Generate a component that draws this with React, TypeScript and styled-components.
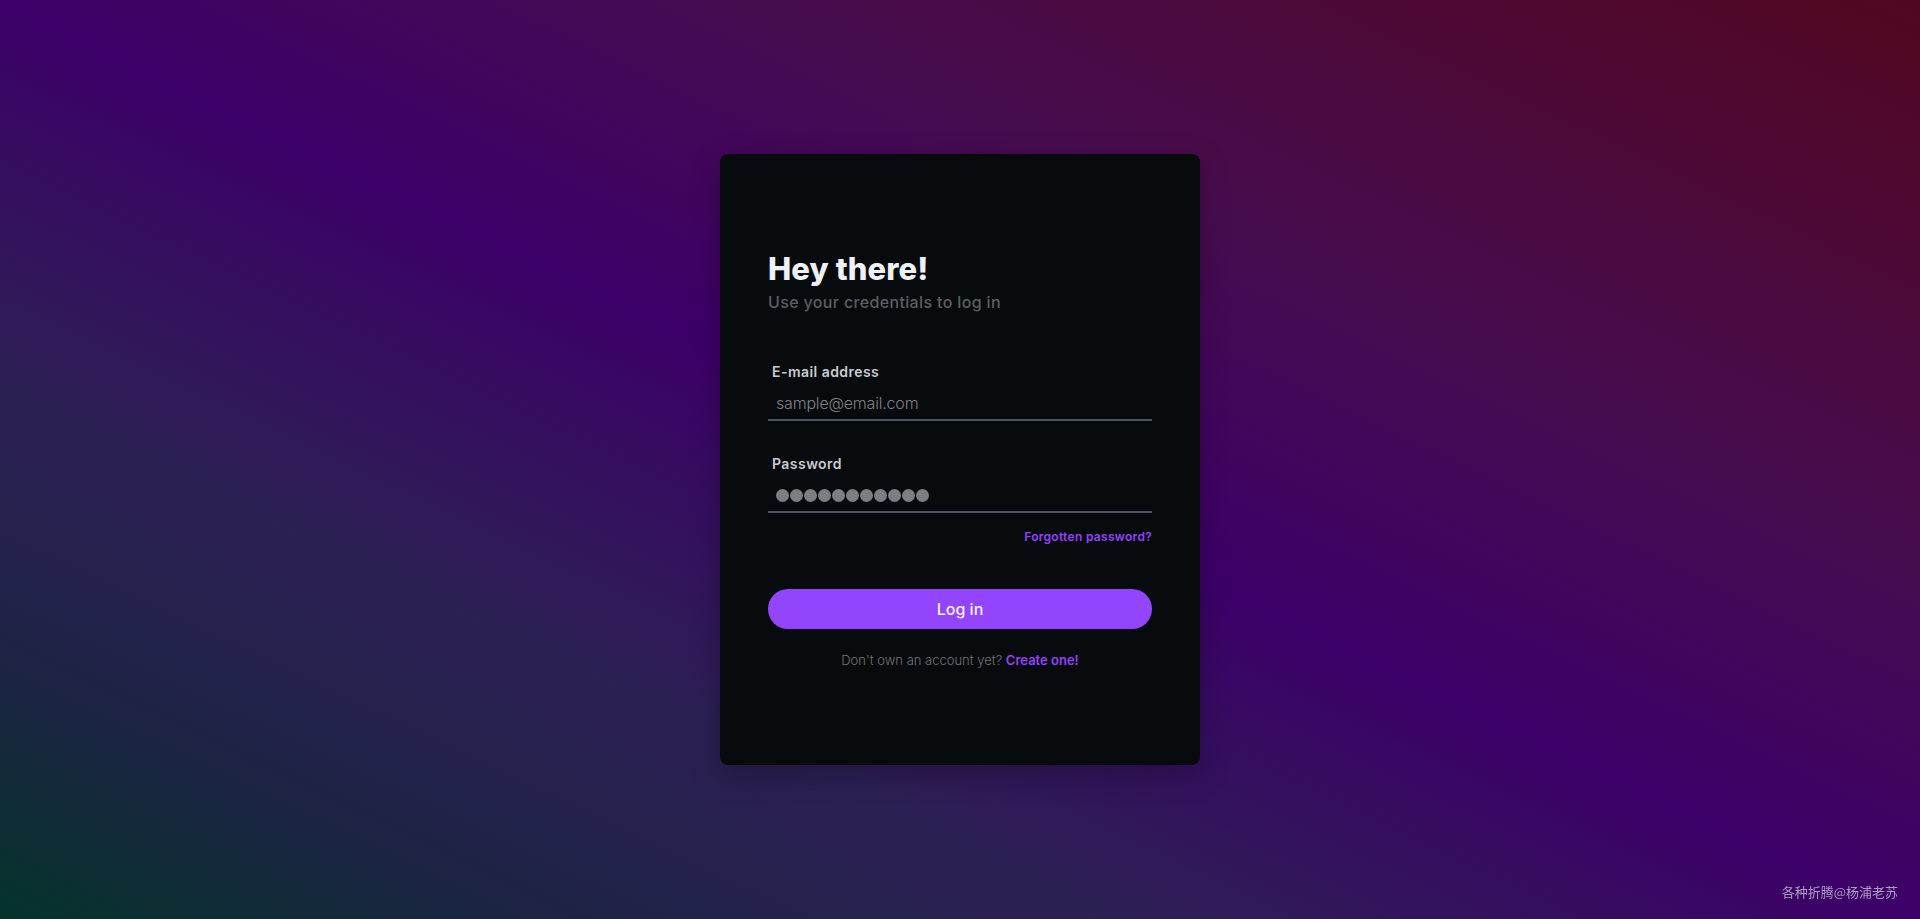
import React from "react";
import styled, { createGlobalStyle } from "styled-components";

const GlobalStyle = createGlobalStyle`
    * {
        box-sizing: border-box;
    }
    html,
    body {
        margin: 0;
        padding: 0;
        height: 100%;
    }
    body {
        font-family: "Inter", "Noto Sans", sans-serif;
        background: linear-gradient(
            to top right,
            #04332a 0%,
            #1d2444 14%,
            #2d1f55 30%,
            #3c0068 50%,
            #470c4e 70%,
            #520720 100%
        );
        background-attachment: fixed;
    }
`;

const Page = styled.main`
    min-height: 100vh;
    display: flex;
    align-items: center;
    justify-content: center;
`;

const Card = styled.form`
    width: 480px;
    padding: 96px 48px 96px;
    background: #080b0e;
    border-radius: 8px;
    box-shadow: 0 10px 30px rgba(0, 0, 0, 0.25);
    display: flex;
    flex-direction: column;
`;

const Title = styled.h1`
    margin: 0;
    font-size: 31px;
    line-height: 1.2;
    font-weight: 800;
    letter-spacing: 0.1px;
    color: #eef2f7;
`;

const Subtitle = styled.p`
    margin: 3px 0 48px;
    font-size: 16px;
    line-height: 24px;
    font-weight: 500;
    letter-spacing: 0.35px;
    color: #5b5f65;
`;

const Field = styled.label<{ $gap?: number }>`
    display: flex;
    flex-direction: column;
    margin-bottom: ${(p) => p.$gap ?? 0}px;
`;

const LabelText = styled.span`
    padding-left: 4px;
    margin-bottom: 5px;
    font-size: 14px;
    line-height: 20px;
    font-weight: 600;
    letter-spacing: 0.45px;
    color: #c9cbd0;
`;

const Input = styled.input`
    width: 100%;
    padding: 6px 8px;
    border: none;
    border-bottom: 2px solid #4a5260;
    background: transparent;
    outline: none;
    font-family: "Inter", sans-serif;
    font-size: 16px;
    line-height: 20px;
    font-weight: 300;
    letter-spacing: -0.2px;
    color: #7d8185;
    &::placeholder {
        color: #7d8185;
    }
`;

const DotsBox = styled.div`
    height: 34px;
    padding: 0 8px;
    display: flex;
    align-items: center;
    gap: 1px;
    border-bottom: 2px solid #4a5260;
`;

const Dot = styled.span`
    width: 13px;
    height: 13px;
    border-radius: 50%;
    background: #7b7f84;
`;

const ForgotRow = styled.div`
    display: flex;
    justify-content: flex-end;
    margin-top: 16px;
    margin-bottom: 44px;
`;

const Link = styled.a<{ $size?: number }>`
    font-size: ${(p) => p.$size ?? 12}px;
    line-height: 16px;
    font-weight: 600;
    letter-spacing: ${(p) => (p.$size ? 0 : 0.3)}px;
    color: #9142fb;
    text-decoration: none;
    cursor: pointer;
`;

const Button = styled.button`
    height: 40px;
    border: none;
    border-radius: 20px;
    background: #9345fd;
    color: #f4f0ff;
    font-family: "Inter", sans-serif;
    font-size: 16px;
    font-weight: 500;
    cursor: pointer;
`;

const Footer = styled.p`
    margin: 22px 0 0;
    text-align: center;
    font-size: 13px;
    line-height: 18px;
    font-weight: 300;
    color: #70747a;
`;

const Watermark = styled.div`
    position: fixed;
    right: 22px;
    bottom: 18px;
    font-family: "Noto Sans CJK SC", sans-serif;
    font-size: 13px;
    color: rgba(220, 215, 235, 0.72);
`;

export default function App() {
    return (
        <>
            <GlobalStyle />
            <Page>
                <Card onSubmit={(e) => e.preventDefault()}>
                    <Title>Hey there!</Title>
                    <Subtitle>Use your credentials to log in</Subtitle>
                    <Field $gap={33}>
                        <LabelText>E-mail address</LabelText>
                        <Input type="email" placeholder="sample@email.com" />
                    </Field>
                    <Field as="div">
                        <LabelText>Password</LabelText>
                        <DotsBox aria-label="Password">
                            {Array.from({ length: 11 }, (_, i) => (
                                <Dot key={i} />
                            ))}
                        </DotsBox>
                    </Field>
                    <ForgotRow>
                        <Link>Forgotten password?</Link>
                    </ForgotRow>
                    <Button type="submit">Log in</Button>
                    <Footer>
                        Don't own an account yet? <Link $size={13}>Create one!</Link>
                    </Footer>
                </Card>
            </Page>
            <Watermark>各种折腾@杨浦老苏</Watermark>
        </>
    );
}
